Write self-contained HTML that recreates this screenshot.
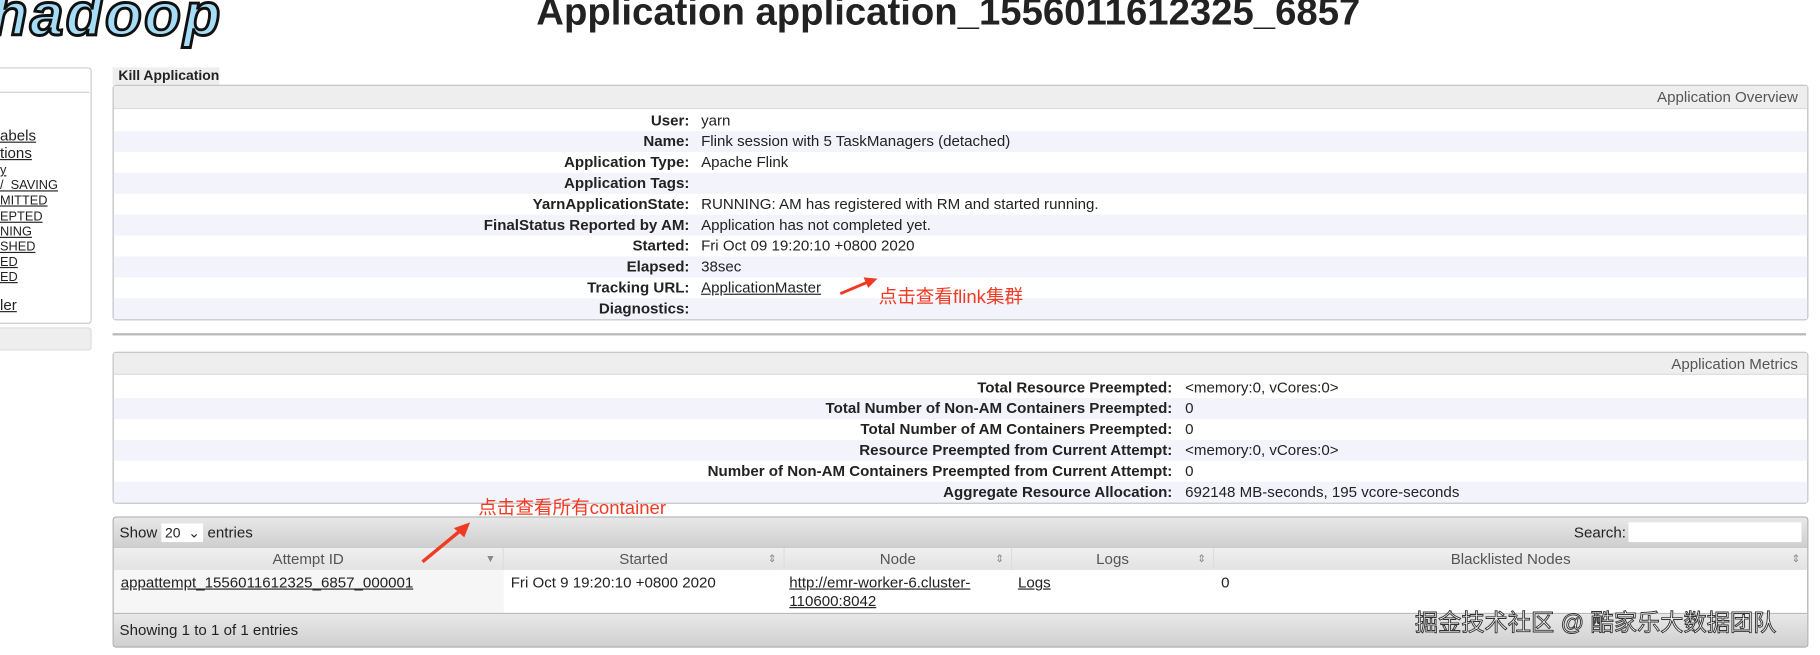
<!DOCTYPE html>
<html><head><meta charset="utf-8">
<style>
html,body{margin:0;padding:0;background:#fff;overflow:hidden;width:1820px;height:654px}
#w{position:absolute;left:0;top:0;width:1568px;height:564px;transform:scale(1.16071);transform-origin:0 0;font-family:"Liberation Sans","Noto Sans CJK SC",sans-serif;font-size:13px;color:#222}
.a{position:absolute}
u{color:#222}
.box{position:absolute;border:1px solid #bbb;border-radius:3px;background:#fff}
.hd{position:absolute;left:0;right:0;top:0;background:#eee;color:#555;text-align:right;padding-right:8px;box-sizing:border-box;border-bottom:1px solid #ddd}
.row{position:absolute;left:0;right:0;height:18px;line-height:18px}
.row.o{background:#f3f3fb}
.lb{position:absolute;text-align:right;font-weight:bold}
.vl{position:absolute}
.red{color:#f03a24;font-size:16px;position:absolute;white-space:nowrap}
.grad{background:linear-gradient(#e8e8e8,#cfcfcf);}
.th{position:absolute;top:0;height:19px;line-height:19px;text-align:center;color:#555;border-right:1px solid #ddd;box-sizing:border-box}
.th i{position:absolute;right:6px;top:0;font-style:normal;font-size:9px;color:#888}
</style></head><body><div id="w">
<div class="a" style="left:-8px;top:-17px;font:italic bold 52px 'Liberation Sans',sans-serif;color:#a6dcf6;-webkit-text-stroke:2.5px #111;letter-spacing:2px">hadoop</div>
<div class="a" style="left:0;width:1634px;top:-9px;text-align:center;font:bold 33px 'Liberation Sans',sans-serif;color:#222;line-height:38px">Application application_1556011612325_6857</div>

<div class="box" style="left:-6px;top:58px;width:83px;height:219px;border-color:#ccc"></div>
<div class="a" style="left:0;top:79px;width:77px;border-top:1px solid #ccc"></div>
<div class="a" style="left:0;top:109px;line-height:15px;font-size:13px"><u>abels</u><br><u>tions</u></div>
<div class="a" style="left:0;top:141px;line-height:13.2px;font-size:11px"><u>y</u><br><u>/_SAVING</u><br><u>MITTED</u><br><u>EPTED</u><br><u>NING</u><br><u>SHED</u><br><u>ED</u><br><u>ED</u></div>
<div class="a" style="left:0;top:255px;font-size:13px"><u>ler</u></div>
<div class="box" style="left:-6px;top:282px;width:83px;height:18px;background:#eee;border-color:#ddd"></div>

<div class="a" style="left:97px;top:58px;width:92px;height:15px;background:#eee;font-weight:bold;font-size:12px;line-height:15px;padding-left:5px;box-sizing:border-box">Kill Application</div>
<div class="box" style="left:97px;top:73px;width:1459px;height:201px">
<div class="hd" style="height:20px;line-height:20px">Application Overview</div>
<div class="row" style="top:21px"></div><div class="row o" style="top:39px"></div><div class="row" style="top:57px"></div><div class="row o" style="top:75px"></div><div class="row" style="top:93px"></div><div class="row o" style="top:111px"></div><div class="row" style="top:129px"></div><div class="row o" style="top:147px"></div><div class="row" style="top:165px"></div><div class="row o" style="top:183px"></div>
<div class="lb" style="right:963px;top:21px;line-height:18px">User:<br>Name:<br>Application Type:<br>Application Tags:<br>YarnApplicationState:<br>FinalStatus Reported by AM:<br>Started:<br>Elapsed:<br>Tracking URL:<br>Diagnostics:</div>
<div class="vl" style="left:506px;top:21px;line-height:18px">yarn<br>Flink session with 5 TaskManagers (detached)<br>Apache Flink<br>&nbsp;<br>RUNNING: AM has registered with RM and started running.<br>Application has not completed yet.<br>Fri Oct 09 19:20:10 +0800 2020<br>38sec<br><u>ApplicationMaster</u></div>
</div>
<div class="a" style="left:97px;top:287px;width:1459px;height:2px;background:#bbb"></div>

<div class="box" style="left:97px;top:303px;width:1459px;height:129px">
<div class="hd" style="height:19px;line-height:19px">Application Metrics</div>
<div class="row" style="top:21px"></div><div class="row o" style="top:39px"></div><div class="row" style="top:57px"></div><div class="row o" style="top:75px"></div><div class="row" style="top:93px"></div><div class="row o" style="top:111px"></div>
<div class="lb" style="right:547px;top:21px;line-height:18px">Total Resource Preempted:<br>Total Number of Non-AM Containers Preempted:<br>Total Number of AM Containers Preempted:<br>Resource Preempted from Current Attempt:<br>Number of Non-AM Containers Preempted from Current Attempt:<br>Aggregate Resource Allocation:</div>
<div class="vl" style="left:923px;top:21px;line-height:18px">&lt;memory:0, vCores:0&gt;<br>0<br>0<br>&lt;memory:0, vCores:0&gt;<br>0<br>692148 MB-seconds, 195 vcore-seconds</div>
</div>

<div class="box" style="left:97px;top:445px;width:1459px;height:111px;border-color:#aaa;overflow:hidden">
<div class="a grad" style="left:0;right:0;top:0;height:25px;border-bottom:1px solid #bbb"></div>
<div class="a" style="left:5px;top:5px;line-height:16px">Show <span style="display:inline-block;background:#fff;width:36px;height:16px;vertical-align:top;font-size:12px;padding-left:3px;box-sizing:border-box">20 &nbsp;⌄</span> entries</div>
<div class="a" style="left:1258px;top:5px;line-height:16px">Search:</div>
<div class="a" style="left:1305px;top:4px;width:149px;height:17px;background:#fff"></div>
<div class="a" style="left:0;right:0;top:26px;height:19px;background:linear-gradient(#f0f0f0,#e2e2e2)">
<div class="th" style="left:0;width:336px">Attempt ID<i>▼</i></div>
<div class="th" style="left:336px;width:242px">Started<i>⇕</i></div>
<div class="th" style="left:578px;width:196px">Node<i>⇕</i></div>
<div class="th" style="left:774px;width:174px">Logs<i>⇕</i></div>
<div class="th" style="left:948px;width:511px;border:none">Blacklisted Nodes<i>⇕</i></div>
</div>
<div class="a" style="left:0;width:336px;top:45px;height:37px;background:#f6f6f6"></div>
<div class="a" style="left:6px;top:48px;line-height:16px"><u>appattempt_1556011612325_6857_000001</u></div>
<div class="a" style="left:342px;top:48px;line-height:16px">Fri Oct 9 19:20:10 +0800 2020</div>
<div class="a" style="left:582px;top:48px;line-height:16px"><u>http://emr-worker-6.cluster-</u><br><u>110600:8042</u></div>
<div class="a" style="left:779px;top:48px;line-height:16px"><u>Logs</u></div>
<div class="a" style="left:954px;top:48px;line-height:16px">0</div>
<div class="a grad" style="left:0;right:0;top:82px;height:29px;border-top:1px solid #bbb"></div>
<div class="a" style="left:5px;top:89px;line-height:16px">Showing 1 to 1 of 1 entries</div>
</div>

<svg class="a" style="left:0;top:0" width="1568" height="564">
<path d="M724 253 L750 242" stroke="#f03a24" stroke-width="2.5"/><path d="M756 240 L744 239 L748 248 Z" fill="#f03a24"/>
<path d="M364 484 L398 456" stroke="#f03a24" stroke-width="3"/><path d="M405 450 L391 455 L400 463 Z" fill="#f03a24"/>
</svg>
<div class="red" style="left:757px;top:242px">点击查看flink集群</div>
<div class="red" style="left:412px;top:424px">点击查看所有container</div>
<div class="a" style="left:1219px;top:520px;font-size:20px;color:#fff;-webkit-text-stroke:0.8px #333;white-space:nowrap">掘金技术社区 @ 酷家乐大数据团队</div>
</div></body></html>
